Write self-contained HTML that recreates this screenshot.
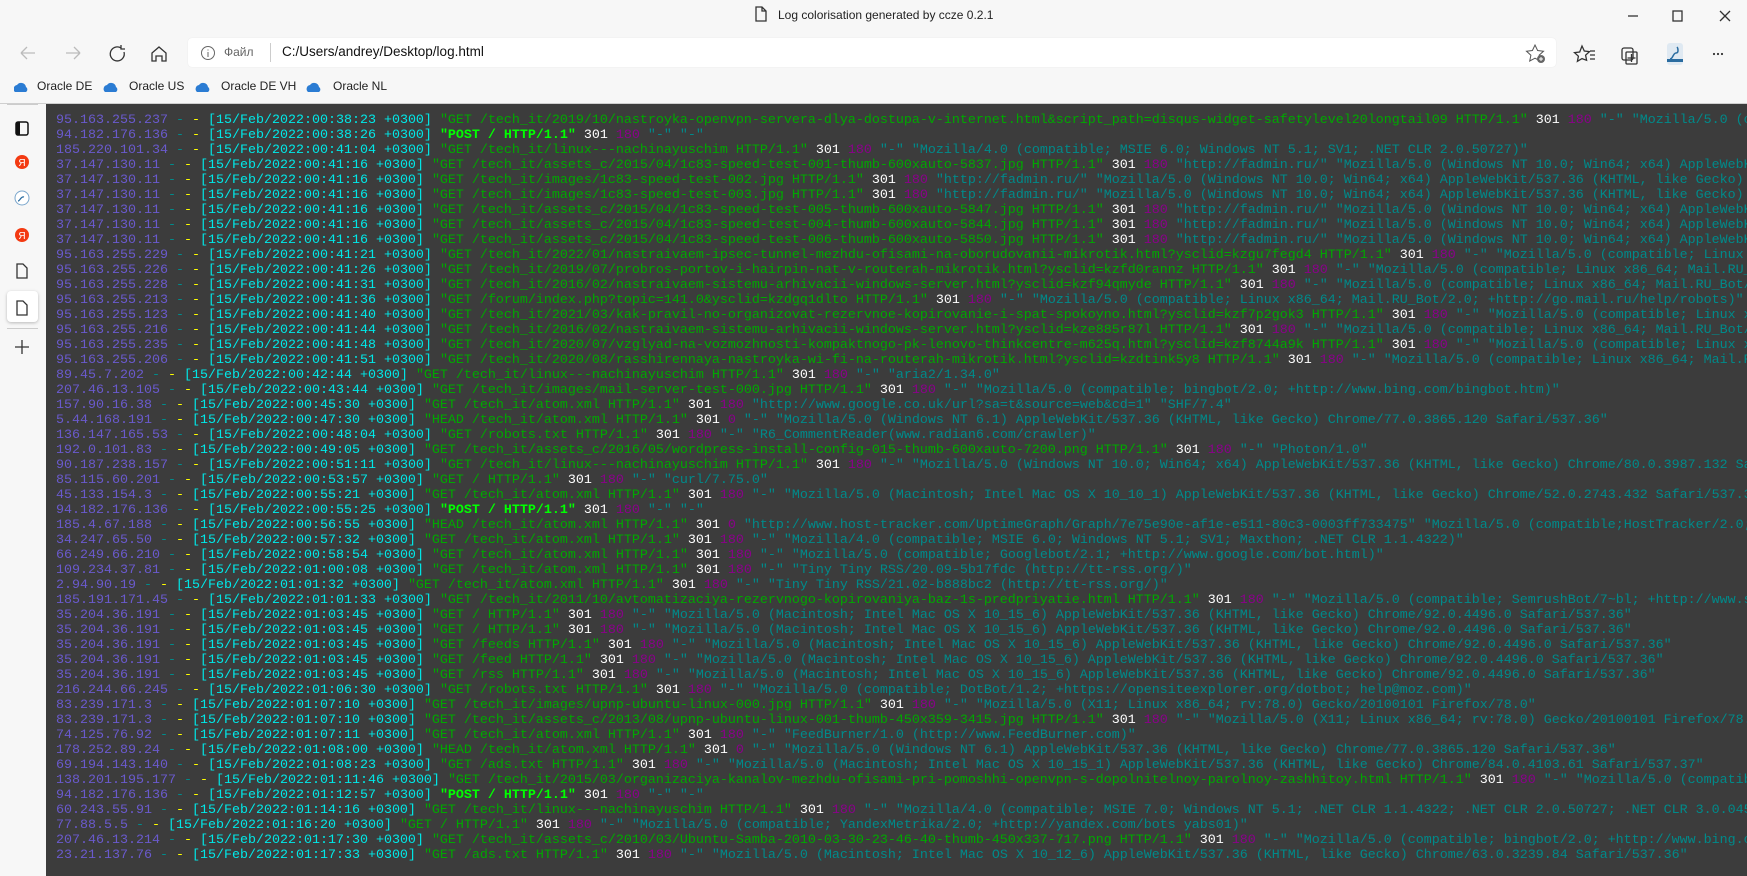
<!DOCTYPE html>
<html><head><meta charset="utf-8">
<style>
*{margin:0;padding:0;box-sizing:border-box}
body{width:1747px;height:876px;overflow:hidden;background:#f7f7f7;font-family:"Liberation Sans",sans-serif;position:relative}
.abs{position:absolute}
#title{top:8px;left:778px;font-size:12px;color:#222}
#addr{left:188px;top:38px;width:1368px;height:29px;background:#fff;border-radius:4px;box-shadow:0 0 1px #ddd}
#content{left:46px;top:104px;width:1701px;height:772px;background:#3c3c3c;overflow:hidden}
#log{position:absolute;left:10px;top:9px;font-family:"Liberation Mono",monospace;font-size:13.33px;line-height:15px;white-space:pre;color:#008f8f}
ip{color:#6a5acd}d{color:#008b8b}y{color:#ffff00}c{color:#00e8e8}g{color:#00a800}p{display:inline;color:#00ff00;font-weight:bold}w{color:#fff}m{color:#8b008b}t{color:#008a8a}
.bm{font-size:12px;color:#222;top:79px}
.ic{stroke:#333;fill:none;stroke-width:1.3}
</style></head><body>
<div class="abs" id="title">Log colorisation generated by ccze 0.2.1</div>
<svg class="abs" style="left:755px;top:6px" width="12" height="16"><path d="M1 1h6l4 4v10H1z M7 1v4h4" class="ic"/></svg>
<svg class="abs" style="left:1620px;top:6px" width="120" height="20"><path d="M8 10h10" class="ic"/><rect x="53" y="5" width="9" height="10" class="ic"/><path d="M100 5l10 10M110 5l-10 10" class="ic"/></svg>
<svg class="abs" style="left:15px;top:42px" width="170" height="22">
<path d="M6 11h14M6 11l6-6M6 11l6 6" stroke="#bbb" fill="none" stroke-width="1.3"/>
<path d="M51 11h14M65 11l-6-6M65 11l-6 6" stroke="#bbb" fill="none" stroke-width="1.3"/>
<path d="M106 6a7 7 0 1 0 3 4M106 3v4h4" class="ic"/>
<path d="M137 11l7-6 7 6v8h-4v-5h-6v5h-4z" class="ic"/>
</svg>
<div class="abs" id="addr"></div>
<svg class="abs" style="left:200px;top:45px" width="16" height="16"><circle cx="8" cy="8" r="6.5" stroke="#666" fill="none"/><path d="M8 7v5M8 4.5v1" stroke="#666"/></svg>
<div class="abs" style="left:224px;top:45px;font-size:12px;color:#666">Файл</div>
<div class="abs" style="left:270px;top:43px;width:1px;height:19px;background:#ccc"></div>
<div class="abs" style="left:282px;top:44px;font-size:13.5px;color:#111">C:/Users/andrey/Desktop/log.html</div>
<svg class="abs" style="left:1524px;top:43px" width="200" height="22">
<path d="M11 2l2.6 5.5 5.9.7-4.4 4 1.2 5.8L11 15.2 5.7 18l1.2-5.8-4.4-4 5.9-.7z" stroke="#555" fill="none"/><circle cx="17" cy="16" r="4" fill="#666"/><path d="M17 14v4M15 16h4" stroke="#fff"/>
<path d="M58 3l2.3 5 5.2.6-3.9 3.6 1 5.1L58 15.6l-4.6 2.7 1-5.1-3.9-3.6 5.2-.6z" class="ic"/><path d="M66 8h5M66 12h5M66 16h5" class="ic"/>
<rect x="98" y="5" width="11" height="12" rx="2" class="ic"/><rect x="102" y="9" width="11" height="12" rx="1" fill="#fff" class="ic"/><path d="M107.5 11v8M103.5 15h8" class="ic"/>
<rect x="143" y="0" width="16" height="22" rx="3" fill="#dfe9f2"/><path d="M146 16c3 0 3-6 6-6s2-5 1-6" stroke="#2a6ca0" stroke-width="1.5" fill="none"/><rect x="143" y="16" width="16" height="3" fill="#2a6ca0"/>
<circle cx="190" cy="11" r="1.1" fill="#333"/><circle cx="194" cy="11" r="1.1" fill="#333"/><circle cx="198" cy="11" r="1.1" fill="#333"/>
</svg>
<svg class="abs" style="left:14px;top:80px" width="320" height="14">
<g fill="#2b7cd3"><path d="M1 12a4 4 0 0 1 2-7 5 5 0 0 1 9 2 3 3 0 0 1 0 5z"/><path d="M91 12a4 4 0 0 1 2-7 5 5 0 0 1 9 2 3 3 0 0 1 0 5z"/><path d="M183 12a4 4 0 0 1 2-7 5 5 0 0 1 9 2 3 3 0 0 1 0 5z"/><path d="M294 12a4 4 0 0 1 2-7 5 5 0 0 1 9 2 3 3 0 0 1 0 5z"/></g></svg>
<div class="abs bm" style="left:37px">Oracle DE</div>
<div class="abs bm" style="left:129px">Oracle US</div>
<div class="abs bm" style="left:221px">Oracle DE VH</div>
<div class="abs bm" style="left:333px">Oracle NL</div>
<div class="abs" style="left:0;top:103px;width:1747px;height:1px;background:#cfcfcf"></div>
<div class="abs" style="left:7px;top:104px;width:31px;height:1px;background:#ccc"></div>
<div class="abs" style="left:7px;top:291px;width:31px;height:31px;background:#fff;border-radius:4px;box-shadow:0 1px 3px rgba(0,0,0,.25)"></div>
<div class="abs" style="left:7px;top:328px;width:31px;height:1px;background:#ccc"></div>
<svg class="abs" style="left:0;top:110px" width="46" height="250">
<rect x="16" y="12" width="12" height="13" rx="2" stroke="#111" stroke-width="1.5" fill="none"/><rect x="16" y="12" width="4" height="13" fill="#111"/>
<circle cx="22" cy="52" r="7" fill="#f33a12"/><text x="22" y="56" font-size="10" fill="#fff" text-anchor="middle" font-family="Liberation Sans">Я</text>
<circle cx="22" cy="88" r="7" fill="#fff" stroke="#7aa6cc"/><path d="M18 91c2 0 3-5 6-4" stroke="#2a6ca0" fill="none" stroke-width="1.3"/>
<circle cx="22" cy="125" r="7" fill="#f33a12"/><text x="22" y="129" font-size="10" fill="#fff" text-anchor="middle" font-family="Liberation Sans">Я</text>
<path d="M17 154h6l4 4v10H17z" class="ic"/>
<path d="M17 191h6l4 4v10H17z" class="ic"/>
<path d="M22 230v14M15 237h14" class="ic"/>
</svg>
<div class="abs" id="content"><div id="log"><ip>95.163.255.237</ip> <d>-</d> <y>-</y> <c>[15/Feb/2022:00:38:23 +0300]</c> <g>"GET /tech_it/2019/10/nastroyka-openvpn-servera-dlya-dostupa-v-internet.html&amp;script_path=disqus-widget-safetylevel20longtail09 HTTP/1.1"</g> <w>301</w> <m>180</m> <t>"-" "Mozilla/5.0 (compatible; Linux x86_64)"</t>
<ip>94.182.176.136</ip> <d>-</d> <y>-</y> <c>[15/Feb/2022:00:38:26 +0300]</c> <p>"POST / HTTP/1.1"</p> <w>301</w> <m>180</m> <t>"-" "-"</t>
<ip>185.220.101.34</ip> <d>-</d> <y>-</y> <c>[15/Feb/2022:00:41:04 +0300]</c> <g>"GET /tech_it/linux---nachinayuschim HTTP/1.1"</g> <w>301</w> <m>180</m> <t>"-" "Mozilla/4.0 (compatible; MSIE 6.0; Windows NT 5.1; SV1; .NET CLR 2.0.50727)"</t>
<ip>37.147.130.11</ip> <d>-</d> <y>-</y> <c>[15/Feb/2022:00:41:16 +0300]</c> <g>"GET /tech_it/assets_c/2015/04/1c83-speed-test-001-thumb-600xauto-5837.jpg HTTP/1.1"</g> <w>301</w> <m>180</m> <t>"http://fadmin.ru/" "Mozilla/5.0 (Windows NT 10.0; Win64; x64) AppleWebKit/537.36 (KHTML, like Gecko) Chrome/98.0"</t>
<ip>37.147.130.11</ip> <d>-</d> <y>-</y> <c>[15/Feb/2022:00:41:16 +0300]</c> <g>"GET /tech_it/images/1c83-speed-test-002.jpg HTTP/1.1"</g> <w>301</w> <m>180</m> <t>"http://fadmin.ru/" "Mozilla/5.0 (Windows NT 10.0; Win64; x64) AppleWebKit/537.36 (KHTML, like Gecko) Chrome/98.0.4758.82"</t>
<ip>37.147.130.11</ip> <d>-</d> <y>-</y> <c>[15/Feb/2022:00:41:16 +0300]</c> <g>"GET /tech_it/images/1c83-speed-test-003.jpg HTTP/1.1"</g> <w>301</w> <m>180</m> <t>"http://fadmin.ru/" "Mozilla/5.0 (Windows NT 10.0; Win64; x64) AppleWebKit/537.36 (KHTML, like Gecko) Chrome/98.0.4758.82"</t>
<ip>37.147.130.11</ip> <d>-</d> <y>-</y> <c>[15/Feb/2022:00:41:16 +0300]</c> <g>"GET /tech_it/assets_c/2015/04/1c83-speed-test-005-thumb-600xauto-5847.jpg HTTP/1.1"</g> <w>301</w> <m>180</m> <t>"http://fadmin.ru/" "Mozilla/5.0 (Windows NT 10.0; Win64; x64) AppleWebKit/537.36 (KHTML, like Gecko)"</t>
<ip>37.147.130.11</ip> <d>-</d> <y>-</y> <c>[15/Feb/2022:00:41:16 +0300]</c> <g>"GET /tech_it/assets_c/2015/04/1c83-speed-test-004-thumb-600xauto-5844.jpg HTTP/1.1"</g> <w>301</w> <m>180</m> <t>"http://fadmin.ru/" "Mozilla/5.0 (Windows NT 10.0; Win64; x64) AppleWebKit/537.36 (KHTML, like Gecko)"</t>
<ip>37.147.130.11</ip> <d>-</d> <y>-</y> <c>[15/Feb/2022:00:41:16 +0300]</c> <g>"GET /tech_it/assets_c/2015/04/1c83-speed-test-006-thumb-600xauto-5850.jpg HTTP/1.1"</g> <w>301</w> <m>180</m> <t>"http://fadmin.ru/" "Mozilla/5.0 (Windows NT 10.0; Win64; x64) AppleWebKit/537.36 (KHTML, like Gecko)"</t>
<ip>95.163.255.229</ip> <d>-</d> <y>-</y> <c>[15/Feb/2022:00:41:21 +0300]</c> <g>"GET /tech_it/2022/01/nastraivaem-ipsec-tunnel-mezhdu-ofisami-na-oborudovanii-mikrotik.html?ysclid=kzgu7fegd4 HTTP/1.1"</g> <w>301</w> <m>180</m> <t>"-" "Mozilla/5.0 (compatible; Linux x86_64; Mail.RU_Bot/2.0)"</t>
<ip>95.163.255.226</ip> <d>-</d> <y>-</y> <c>[15/Feb/2022:00:41:26 +0300]</c> <g>"GET /tech_it/2019/07/probros-portov-i-hairpin-nat-v-routerah-mikrotik.html?ysclid=kzfd0rannz HTTP/1.1"</g> <w>301</w> <m>180</m> <t>"-" "Mozilla/5.0 (compatible; Linux x86_64; Mail.RU_Bot/2.0; +http://go.mail.ru)"</t>
<ip>95.163.255.228</ip> <d>-</d> <y>-</y> <c>[15/Feb/2022:00:41:31 +0300]</c> <g>"GET /tech_it/2016/02/nastraivaem-sistemu-arhivacii-windows-server.html?ysclid=kzf94qmyde HTTP/1.1"</g> <w>301</w> <m>180</m> <t>"-" "Mozilla/5.0 (compatible; Linux x86_64; Mail.RU_Bot/2.0; +http://go.mail.ru)"</t>
<ip>95.163.255.213</ip> <d>-</d> <y>-</y> <c>[15/Feb/2022:00:41:36 +0300]</c> <g>"GET /forum/index.php?topic=141.0&amp;ysclid=kzdgq1dlto HTTP/1.1"</g> <w>301</w> <m>180</m> <t>"-" "Mozilla/5.0 (compatible; Linux x86_64; Mail.RU_Bot/2.0; +http://go.mail.ru/help/robots)"</t>
<ip>95.163.255.123</ip> <d>-</d> <y>-</y> <c>[15/Feb/2022:00:41:40 +0300]</c> <g>"GET /tech_it/2021/03/kak-pravil-no-organizovat-rezervnoe-kopirovanie-i-spat-spokoyno.html?ysclid=kzf7p2gok3 HTTP/1.1"</g> <w>301</w> <m>180</m> <t>"-" "Mozilla/5.0 (compatible; Linux x86_64; Mail.RU_Bot/2.0)"</t>
<ip>95.163.255.216</ip> <d>-</d> <y>-</y> <c>[15/Feb/2022:00:41:44 +0300]</c> <g>"GET /tech_it/2016/02/nastraivaem-sistemu-arhivacii-windows-server.html?ysclid=kze885r87l HTTP/1.1"</g> <w>301</w> <m>180</m> <t>"-" "Mozilla/5.0 (compatible; Linux x86_64; Mail.RU_Bot/2.0; +http://go.mail.ru)"</t>
<ip>95.163.255.235</ip> <d>-</d> <y>-</y> <c>[15/Feb/2022:00:41:48 +0300]</c> <g>"GET /tech_it/2020/07/vzglyad-na-vozmozhnosti-kompaktnogo-pk-lenovo-thinkcentre-m625q.html?ysclid=kzf8744a9k HTTP/1.1"</g> <w>301</w> <m>180</m> <t>"-" "Mozilla/5.0 (compatible; Linux x86_64; Mail.RU_Bot/2.0)"</t>
<ip>95.163.255.206</ip> <d>-</d> <y>-</y> <c>[15/Feb/2022:00:41:51 +0300]</c> <g>"GET /tech_it/2020/08/rasshirennaya-nastroyka-wi-fi-na-routerah-mikrotik.html?ysclid=kzdtink5y8 HTTP/1.1"</g> <w>301</w> <m>180</m> <t>"-" "Mozilla/5.0 (compatible; Linux x86_64; Mail.RU_Bot/2.0)"</t>
<ip>89.45.7.202</ip> <d>-</d> <y>-</y> <c>[15/Feb/2022:00:42:44 +0300]</c> <g>"GET /tech_it/linux---nachinayuschim HTTP/1.1"</g> <w>301</w> <m>180</m> <t>"-" "aria2/1.34.0"</t>
<ip>207.46.13.105</ip> <d>-</d> <y>-</y> <c>[15/Feb/2022:00:43:44 +0300]</c> <g>"GET /tech_it/images/mail-server-test-000.jpg HTTP/1.1"</g> <w>301</w> <m>180</m> <t>"-" "Mozilla/5.0 (compatible; bingbot/2.0; +http://www.bing.com/bingbot.htm)"</t>
<ip>157.90.16.38</ip> <d>-</d> <y>-</y> <c>[15/Feb/2022:00:45:30 +0300]</c> <g>"GET /tech_it/atom.xml HTTP/1.1"</g> <w>301</w> <m>180</m> <t>"http://www.google.co.uk/url?sa=t&amp;source=web&amp;cd=1" "SHF/7.4"</t>
<ip>5.44.168.191</ip> <d>-</d> <y>-</y> <c>[15/Feb/2022:00:47:30 +0300]</c> <g>"HEAD /tech_it/atom.xml HTTP/1.1"</g> <w>301</w> <m>0</m> <t>"-" "Mozilla/5.0 (Windows NT 6.1) AppleWebKit/537.36 (KHTML, like Gecko) Chrome/77.0.3865.120 Safari/537.36"</t>
<ip>136.147.165.53</ip> <d>-</d> <y>-</y> <c>[15/Feb/2022:00:48:04 +0300]</c> <g>"GET /robots.txt HTTP/1.1"</g> <w>301</w> <m>180</m> <t>"-" "R6_CommentReader(www.radian6.com/crawler)"</t>
<ip>192.0.101.83</ip> <d>-</d> <y>-</y> <c>[15/Feb/2022:00:49:05 +0300]</c> <g>"GET /tech_it/assets_c/2016/05/wordpress-install-config-015-thumb-600xauto-7200.png HTTP/1.1"</g> <w>301</w> <m>180</m> <t>"-" "Photon/1.0"</t>
<ip>90.187.238.157</ip> <d>-</d> <y>-</y> <c>[15/Feb/2022:00:51:11 +0300]</c> <g>"GET /tech_it/linux---nachinayuschim HTTP/1.1"</g> <w>301</w> <m>180</m> <t>"-" "Mozilla/5.0 (Windows NT 10.0; Win64; x64) AppleWebKit/537.36 (KHTML, like Gecko) Chrome/80.0.3987.132 Safari/537.36"</t>
<ip>85.115.60.201</ip> <d>-</d> <y>-</y> <c>[15/Feb/2022:00:53:57 +0300]</c> <g>"GET / HTTP/1.1"</g> <w>301</w> <m>180</m> <t>"-" "curl/7.75.0"</t>
<ip>45.133.154.3</ip> <d>-</d> <y>-</y> <c>[15/Feb/2022:00:55:21 +0300]</c> <g>"GET /tech_it/atom.xml HTTP/1.1"</g> <w>301</w> <m>180</m> <t>"-" "Mozilla/5.0 (Macintosh; Intel Mac OS X 10_10_1) AppleWebKit/537.36 (KHTML, like Gecko) Chrome/52.0.2743.432 Safari/537.36"</t>
<ip>94.182.176.136</ip> <d>-</d> <y>-</y> <c>[15/Feb/2022:00:55:25 +0300]</c> <p>"POST / HTTP/1.1"</p> <w>301</w> <m>180</m> <t>"-" "-"</t>
<ip>185.4.67.188</ip> <d>-</d> <y>-</y> <c>[15/Feb/2022:00:56:55 +0300]</c> <g>"HEAD /tech_it/atom.xml HTTP/1.1"</g> <w>301</w> <m>0</m> <t>"http://www.host-tracker.com/UptimeGraph/Graph/7e75e90e-af1e-e511-80c3-0003ff733475" "Mozilla/5.0 (compatible;HostTracker/2.0;+http://www.host-tracker.com/)"</t>
<ip>34.247.65.50</ip> <d>-</d> <y>-</y> <c>[15/Feb/2022:00:57:32 +0300]</c> <g>"GET /tech_it/atom.xml HTTP/1.1"</g> <w>301</w> <m>180</m> <t>"-" "Mozilla/4.0 (compatible; MSIE 6.0; Windows NT 5.1; SV1; Maxthon; .NET CLR 1.1.4322)"</t>
<ip>66.249.66.210</ip> <d>-</d> <y>-</y> <c>[15/Feb/2022:00:58:54 +0300]</c> <g>"GET /tech_it/atom.xml HTTP/1.1"</g> <w>301</w> <m>180</m> <t>"-" "Mozilla/5.0 (compatible; Googlebot/2.1; +http://www.google.com/bot.html)"</t>
<ip>109.234.37.81</ip> <d>-</d> <y>-</y> <c>[15/Feb/2022:01:00:08 +0300]</c> <g>"GET /tech_it/atom.xml HTTP/1.1"</g> <w>301</w> <m>180</m> <t>"-" "Tiny Tiny RSS/20.09-5b17fdc (http://tt-rss.org/)"</t>
<ip>2.94.90.19</ip> <d>-</d> <y>-</y> <c>[15/Feb/2022:01:01:32 +0300]</c> <g>"GET /tech_it/atom.xml HTTP/1.1"</g> <w>301</w> <m>180</m> <t>"-" "Tiny Tiny RSS/21.02-b888bc2 (http://tt-rss.org/)"</t>
<ip>185.191.171.45</ip> <d>-</d> <y>-</y> <c>[15/Feb/2022:01:01:33 +0300]</c> <g>"GET /tech_it/2011/10/avtomatizaciya-rezervnogo-kopirovaniya-baz-1s-predpriyatie.html HTTP/1.1"</g> <w>301</w> <m>180</m> <t>"-" "Mozilla/5.0 (compatible; SemrushBot/7~bl; +http://www.semrush.com/bot.html)"</t>
<ip>35.204.36.191</ip> <d>-</d> <y>-</y> <c>[15/Feb/2022:01:03:45 +0300]</c> <g>"GET / HTTP/1.1"</g> <w>301</w> <m>180</m> <t>"-" "Mozilla/5.0 (Macintosh; Intel Mac OS X 10_15_6) AppleWebKit/537.36 (KHTML, like Gecko) Chrome/92.0.4496.0 Safari/537.36"</t>
<ip>35.204.36.191</ip> <d>-</d> <y>-</y> <c>[15/Feb/2022:01:03:45 +0300]</c> <g>"GET / HTTP/1.1"</g> <w>301</w> <m>180</m> <t>"-" "Mozilla/5.0 (Macintosh; Intel Mac OS X 10_15_6) AppleWebKit/537.36 (KHTML, like Gecko) Chrome/92.0.4496.0 Safari/537.36"</t>
<ip>35.204.36.191</ip> <d>-</d> <y>-</y> <c>[15/Feb/2022:01:03:45 +0300]</c> <g>"GET /feeds HTTP/1.1"</g> <w>301</w> <m>180</m> <t>"-" "Mozilla/5.0 (Macintosh; Intel Mac OS X 10_15_6) AppleWebKit/537.36 (KHTML, like Gecko) Chrome/92.0.4496.0 Safari/537.36"</t>
<ip>35.204.36.191</ip> <d>-</d> <y>-</y> <c>[15/Feb/2022:01:03:45 +0300]</c> <g>"GET /feed HTTP/1.1"</g> <w>301</w> <m>180</m> <t>"-" "Mozilla/5.0 (Macintosh; Intel Mac OS X 10_15_6) AppleWebKit/537.36 (KHTML, like Gecko) Chrome/92.0.4496.0 Safari/537.36"</t>
<ip>35.204.36.191</ip> <d>-</d> <y>-</y> <c>[15/Feb/2022:01:03:45 +0300]</c> <g>"GET /rss HTTP/1.1"</g> <w>301</w> <m>180</m> <t>"-" "Mozilla/5.0 (Macintosh; Intel Mac OS X 10_15_6) AppleWebKit/537.36 (KHTML, like Gecko) Chrome/92.0.4496.0 Safari/537.36"</t>
<ip>216.244.66.245</ip> <d>-</d> <y>-</y> <c>[15/Feb/2022:01:06:30 +0300]</c> <g>"GET /robots.txt HTTP/1.1"</g> <w>301</w> <m>180</m> <t>"-" "Mozilla/5.0 (compatible; DotBot/1.2; +https://opensiteexplorer.org/dotbot; help@moz.com)"</t>
<ip>83.239.171.3</ip> <d>-</d> <y>-</y> <c>[15/Feb/2022:01:07:10 +0300]</c> <g>"GET /tech_it/images/upnp-ubuntu-linux-000.jpg HTTP/1.1"</g> <w>301</w> <m>180</m> <t>"-" "Mozilla/5.0 (X11; Linux x86_64; rv:78.0) Gecko/20100101 Firefox/78.0"</t>
<ip>83.239.171.3</ip> <d>-</d> <y>-</y> <c>[15/Feb/2022:01:07:10 +0300]</c> <g>"GET /tech_it/assets_c/2013/08/upnp-ubuntu-linux-001-thumb-450x359-3415.jpg HTTP/1.1"</g> <w>301</w> <m>180</m> <t>"-" "Mozilla/5.0 (X11; Linux x86_64; rv:78.0) Gecko/20100101 Firefox/78.0"</t>
<ip>74.125.76.92</ip> <d>-</d> <y>-</y> <c>[15/Feb/2022:01:07:11 +0300]</c> <g>"GET /tech_it/atom.xml HTTP/1.1"</g> <w>301</w> <m>180</m> <t>"-" "FeedBurner/1.0 (http://www.FeedBurner.com)"</t>
<ip>178.252.89.24</ip> <d>-</d> <y>-</y> <c>[15/Feb/2022:01:08:00 +0300]</c> <g>"HEAD /tech_it/atom.xml HTTP/1.1"</g> <w>301</w> <m>0</m> <t>"-" "Mozilla/5.0 (Windows NT 6.1) AppleWebKit/537.36 (KHTML, like Gecko) Chrome/77.0.3865.120 Safari/537.36"</t>
<ip>69.194.143.140</ip> <d>-</d> <y>-</y> <c>[15/Feb/2022:01:08:23 +0300]</c> <g>"GET /ads.txt HTTP/1.1"</g> <w>301</w> <m>180</m> <t>"-" "Mozilla/5.0 (Macintosh; Intel Mac OS X 10_15_1) AppleWebKit/537.36 (KHTML, like Gecko) Chrome/84.0.4103.61 Safari/537.37"</t>
<ip>138.201.195.177</ip> <d>-</d> <y>-</y> <c>[15/Feb/2022:01:11:46 +0300]</c> <g>"GET /tech_it/2015/03/organizaciya-kanalov-mezhdu-ofisami-pri-pomoshhi-openvpn-s-dopolnitelnoy-parolnoy-zashhitoy.html HTTP/1.1"</g> <w>301</w> <m>180</m> <t>"-" "Mozilla/5.0 (compatible; MJ12bot)"</t>
<ip>94.182.176.136</ip> <d>-</d> <y>-</y> <c>[15/Feb/2022:01:12:57 +0300]</c> <p>"POST / HTTP/1.1"</p> <w>301</w> <m>180</m> <t>"-" "-"</t>
<ip>60.243.55.91</ip> <d>-</d> <y>-</y> <c>[15/Feb/2022:01:14:16 +0300]</c> <g>"GET /tech_it/linux---nachinayuschim HTTP/1.1"</g> <w>301</w> <m>180</m> <t>"-" "Mozilla/4.0 (compatible; MSIE 7.0; Windows NT 5.1; .NET CLR 1.1.4322; .NET CLR 2.0.50727; .NET CLR 3.0.04506.30)"</t>
<ip>77.88.5.5</ip> <d>-</d> <y>-</y> <c>[15/Feb/2022:01:16:20 +0300]</c> <g>"GET / HTTP/1.1"</g> <w>301</w> <m>180</m> <t>"-" "Mozilla/5.0 (compatible; YandexMetrika/2.0; +http://yandex.com/bots yabs01)"</t>
<ip>207.46.13.214</ip> <d>-</d> <y>-</y> <c>[15/Feb/2022:01:17:30 +0300]</c> <g>"GET /tech_it/assets_c/2010/03/Ubuntu-Samba-2010-03-30-23-46-40-thumb-450x337-717.png HTTP/1.1"</g> <w>301</w> <m>180</m> <t>"-" "Mozilla/5.0 (compatible; bingbot/2.0; +http://www.bing.com/bingbot.htm)"</t>
<ip>23.21.137.76</ip> <d>-</d> <y>-</y> <c>[15/Feb/2022:01:17:33 +0300]</c> <g>"GET /ads.txt HTTP/1.1"</g> <w>301</w> <m>180</m> <t>"-" "Mozilla/5.0 (Macintosh; Intel Mac OS X 10_12_6) AppleWebKit/537.36 (KHTML, like Gecko) Chrome/63.0.3239.84 Safari/537.36"</t></div></div>
</body></html>
